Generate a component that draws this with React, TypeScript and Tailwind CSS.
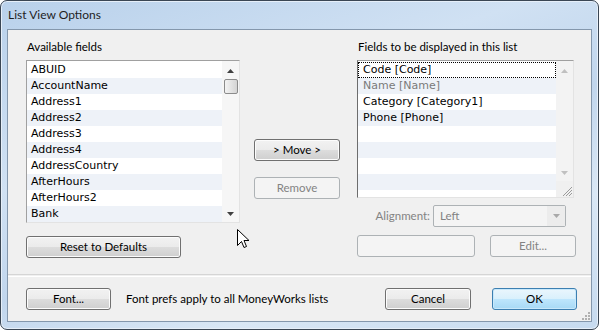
import React from "react";

const available = [
  "ABUID",
  "AccountName",
  "Address1",
  "Address2",
  "Address3",
  "Address4",
  "AddressCountry",
  "AfterHours",
  "AfterHours2",
  "Bank",
];

const shown = [
  { label: "Code [Code]", focus: true },
  { label: "Name [Name]", dim: true },
  { label: "Category [Category1]" },
  { label: "Phone [Phone]" },
  { label: "" },
  { label: "" },
  { label: "" },
  { label: "" },
  { label: "" },
];

const listFont = { fontFamily: '"DejaVu Sans", sans-serif' };

function Button({
  children,
  className = "",
  disabled,
  primary,
}: {
  children?: React.ReactNode;
  className?: string;
  disabled?: boolean;
  primary?: boolean;
}) {
  const look = disabled
    ? "border-[#adb2b5] bg-[#f4f4f4] text-[#838383]"
    : primary
      ? "border-[#3c7fb1] bg-[linear-gradient(#eaf6fd_0%,#d9f0fc_50%,#bee6fd_50%,#a7d9f5_100%)] text-black shadow-[inset_0_0_0_1px_#c8e8fb]"
      : "border-[#707070] bg-[linear-gradient(#f2f2f2_0%,#ebebeb_50%,#dddddd_50%,#cfcfcf_100%)] text-black shadow-[inset_0_0_0_1px_#fcfcfc]";
  return (
    <div
      className={`flex h-[22px] items-center justify-center rounded-[3px] border text-[12px] ${look} ${className}`}
    >
      {children}
    </div>
  );
}

function UpArrow({ color }: { color: string }) {
  return (
    <svg width="7" height="4" viewBox="0 0 7 4">
      <path d="M0 4 L3.5 0 L7 4 Z" fill={color} />
    </svg>
  );
}

function DownArrow({ color }: { color: string }) {
  return (
    <svg width="7" height="4" viewBox="0 0 7 4">
      <path d="M0 0 L7 0 L3.5 4 Z" fill={color} />
    </svg>
  );
}

export default function App() {
  return (
    <div
      className="relative h-[330px] w-[599px] overflow-hidden bg-white"
      style={{ fontFamily: 'Lato, "Noto Sans", sans-serif' }}
    >
      <div className="flex h-[330px] w-[599px] flex-col rounded-[7px] border border-[#3a4654] bg-[linear-gradient(160deg,#b9d1eb_0%,#d0e1f3_35%,#c1d6ed_55%,#d9e7f5_75%,#c6daef_100%)] shadow-[inset_0_0_0_1px_#e6eff9]">
        {/* title bar */}
        <div className="flex h-[28px] shrink-0 items-center pl-[7px] text-[12px] text-[#1e1e1e]">
          List View Options
        </div>

        {/* client area */}
        <div className="mx-[6px] flex h-[293px] flex-col border border-[#8497ac] bg-[#f0f0f0] text-[11.5px]">
          <div className="flex pl-[18px] pt-[9px]">
            {/* left column */}
            <div className="flex w-[214px] flex-col">
              <div className="h-[16px] pl-[1px] leading-[16px] text-black">Available fields</div>
              <div className="mt-[5px] flex h-[163px] border border-[#a0a0a0] border-r-[#e3e3e3] border-b-[#e3e3e3] bg-white">
                <div className="flex-1 pt-[1px]" style={listFont}>
                  {available.map((f, i) => (
                    <div
                      key={f}
                      className={`h-[16px] pl-[4px] text-[11px] leading-[16px] text-black ${i % 2 === 1 ? "bg-[#eef2f8]" : "bg-white"}`}
                    >
                      {f}
                    </div>
                  ))}
                </div>
                <div className="flex w-[17px] flex-col items-center bg-[#f6f6f6]">
                  <div className="flex h-[18px] items-center justify-center pt-[1px]">
                    <UpArrow color="#404040" />
                  </div>
                  <div className="h-[15px] w-[14px] rounded-[2px] border border-[#8b8b8b] bg-[linear-gradient(90deg,#f3f3f3,#e2e2e2_55%,#d4d4d4)]" />
                  <div className="flex-1" />
                  <div className="flex h-[17px] items-center justify-center">
                    <DownArrow color="#404040" />
                  </div>
                </div>
              </div>
              <Button className="mt-[13px] w-[155px] !text-[11.5px]">Reset to Defaults</Button>
            </div>

            {/* middle column */}
            <div className="ml-[14px] flex w-[86px] flex-col pt-[100px]">
              <Button className="!text-[11.5px]">&gt; Move &gt;</Button>
              <Button disabled className="mt-[16px] !text-[11.5px]">
                Remove
              </Button>
            </div>

            {/* right column */}
            <div className="ml-[17px] flex w-[219px] flex-col">
              <div className="h-[16px] pl-[1px] leading-[16px] text-black">
                Fields to be displayed in this list
              </div>
              <div className="mt-[5px] flex h-[138px] w-[217px] border border-[#a0a0a0] border-l-[#6d6d6d] border-r-[#e3e3e3] border-b-[#e3e3e3] bg-white">
                <div className="flex-1 overflow-hidden pt-[1px]" style={listFont}>
                  {shown.map((f, i) => (
                    <div
                      key={i}
                      className={`h-[16px] pl-[4px] text-[11px] leading-[14px] ${i % 2 === 1 ? "bg-[#eef2f8]" : "bg-white"} ${f.dim ? "text-[#7a7a7a]" : "text-black"} ${f.focus ? "border border-dotted border-black" : "border border-transparent"}`}
                    >
                      {f.label}
                    </div>
                  ))}
                </div>
                <div className="flex w-[17px] flex-col items-center bg-[#f3f3f3]">
                  <div className="flex h-[18px] items-center justify-center pt-[1px]">
                    <UpArrow color="#c0c0c0" />
                  </div>
                  <div className="flex-1" />
                  <div className="flex h-[17px] items-center justify-center">
                    <DownArrow color="#c0c0c0" />
                  </div>
                  <div className="flex h-[16px] w-[17px] items-end justify-end bg-[#f0f0f0]">
                    <svg width="12" height="12" viewBox="0 0 12 12">
                      <path d="M11 2 L2 11 M11 5 L5 11 M11 8 L8 11" stroke="#9a9a9a" strokeWidth="1" />
                    </svg>
                  </div>
                </div>
              </div>
              <div className="mt-[7px] flex h-[22px] items-center">
                <div className="w-[76px] pr-[3px] text-right text-[#838383]">Alignment:</div>
                <div className="flex h-[22px] w-[133px] items-center rounded-[2px] border border-[#adb2b5] bg-[#f4f4f4]">
                  <div className="flex-1 pl-[6px] text-[#838383]">Left</div>
                  <div className="flex h-[20px] w-[18px] items-center justify-center bg-[#ececec]">
                    <DownArrow color="#a8a8a8" />
                  </div>
                </div>
              </div>
              <div className="mt-[8px] flex">
                <Button disabled className="w-[118px]" />
                <Button disabled className="ml-[15px] w-[86px] !text-[11.5px]">
                  Edit...
                </Button>
              </div>
            </div>
          </div>

          {/* separator */}
          <div className="mt-[16px] h-[2px] border-t border-[#d5d5d5] bg-[#f0f0f0] shadow-[0_1px_0_#fff]" />

          {/* bottom row */}
          <div className="mt-[12px] flex items-center pl-[18px]">
            <Button className="w-[85px] !text-[11.5px]">Font...</Button>
            <div className="ml-[15px] text-black">Font prefs apply to all MoneyWorks lists</div>
            <div className="flex-1" />
            <Button className="w-[86px] !text-[11.5px]">Cancel</Button>
            <Button primary className="ml-[21px] mr-[14px] w-[85px] !text-[11.5px]">
              OK
            </Button>
          </div>
          <div className="flex flex-1 items-end justify-end pb-[1px] pr-[1px]">
            <svg width="10" height="10" viewBox="0 0 10 10">
              <g fill="#b0b0b0">
                <rect x="8" y="2" width="2" height="2" />
                <rect x="5" y="5" width="2" height="2" />
                <rect x="8" y="5" width="2" height="2" />
                <rect x="2" y="8" width="2" height="2" />
                <rect x="5" y="8" width="2" height="2" />
                <rect x="8" y="8" width="2" height="2" />
              </g>
            </svg>
          </div>
        </div>
      </div>

      {/* mouse pointer */}
      <svg className="absolute left-[237px] top-[229px]" width="13" height="21" viewBox="0 0 13 21">
        <path
          d="M0.5 0.5 L0.5 16.5 L4.5 12.5 L7 18.5 L9.5 17.5 L7 11.5 L12 11.5 Z"
          fill="#fff"
          stroke="#000"
          strokeWidth="1"
          strokeLinejoin="miter"
        />
      </svg>
    </div>
  );
}
